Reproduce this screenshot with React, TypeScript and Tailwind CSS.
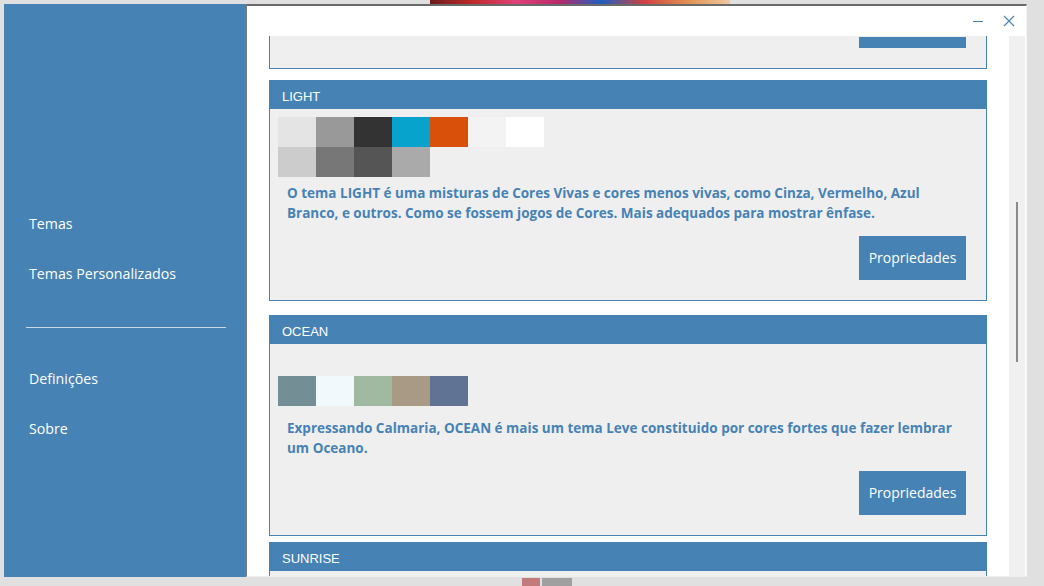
import React from "react";

type Theme = {
  name: string;
  rows: string[][];
  swatchTop: string;
  lines: string[];
};

const themes: Theme[] = [
  {
    name: "LIGHT",
    rows: [
      ["#e4e4e4", "#999999", "#333333", "#07a3cc", "#d9500b", "#f3f3f3", "#ffffff"],
      ["#cccccc", "#777777", "#555555", "#aaaaaa"],
    ],
    swatchTop: "pt-[8px]",
    lines: [
      "O tema LIGHT é uma misturas de Cores Vivas e cores menos vivas, como Cinza, Vermelho, Azul",
      "Branco, e outros. Como se fossem jogos de Cores. Mais adequados para mostrar ênfase.",
    ],
  },
  {
    name: "OCEAN",
    rows: [["#748e96", "#f1f9fc", "#9fbaa0", "#a89a84", "#617394"]],
    swatchTop: "pt-[32px]",
    lines: [
      "Expressando Calmaria, OCEAN é mais um tema Leve constituido por cores fortes que fazer lembrar",
      "um Oceano.",
    ],
  },
];

const PropButton = () => (
  <button className="flex h-[44px] w-[107px] items-center justify-center bg-[#4682b4] pb-[2px] font-['Open_Sans',sans-serif] text-[14px] text-white">
    Propriedades
  </button>
);

const ThemeCard = ({ theme, gap }: { theme: Theme; gap: string }) => (
  <div className={`${gap} border border-[#4682b4] bg-[#efefef]`}>
    <div className="flex h-[28px] items-center bg-[#4682b4] pl-[12px] pt-[3px] font-['Liberation_Sans',sans-serif] text-[13px] text-white">
      {theme.name}
    </div>
    <div className="flex flex-col">
      <div className={`h-[68px] pl-[8px] ${theme.swatchTop}`}>
        {theme.rows.map((row, i) => (
          <div key={i} className="flex">
            {row.map((c, j) => (
              <div key={j} className="h-[30px] w-[38px]" style={{ backgroundColor: c }} />
            ))}
          </div>
        ))}
      </div>
      <p className="mt-[6px] pl-[17px] font-['Open_Sans',sans-serif] text-[13.5px] font-bold leading-[20px] text-[#4682b4]">
        {theme.lines[0]}
        <br />
        {theme.lines[1]}
      </p>
      <div className="mt-[13px] flex justify-end pb-[20px] pr-[20px]">
        <PropButton />
      </div>
    </div>
  </div>
);

const MenuItem = ({ label }: { label: string }) => (
  <div className="flex h-[50px] items-center pl-[25px] font-['Open_Sans',sans-serif] text-[14.2px] text-white">
    {label}
  </div>
);

export default function App() {
  return (
    <div className="flex h-[586px] w-[1044px] flex-col overflow-hidden bg-[#e0e0e0]">
      {/* bits of wallpaper peeking out */}
      <div className="flex h-[4px]">
        <div className="ml-[430px] h-full w-[300px] bg-[linear-gradient(90deg,#6b1a1a,#c02a2a,#e0407a,#b82a6a,#1e5fc0,#d04040,#e09050,#f0c8a0)]" />
      </div>

      <div className="ml-[4px] flex h-[573px]">
        {/* sidebar */}
        <div className="flex w-[242px] flex-col bg-[#4682b4] pt-[195px]">
          <MenuItem label="Temas" />
          <MenuItem label="Temas Personalizados" />
          <div className="ml-[22px] mt-[28px] h-px w-[200px] bg-[#cbd8e5]" />
          <div className="mt-[26px]">
            <MenuItem label="Definições" />
            <MenuItem label="Sobre" />
          </div>
        </div>

        {/* main window */}
        <div className="flex w-[781px] flex-col border-l border-t-2 border-b border-r border-l-[#7a7a7a] border-t-[#6b6b6b] border-b-[#eeeeee] border-r-[#f4f4f4] bg-white">
          <div className="flex h-[30px] items-center justify-end gap-[20px] pr-[10px] text-[#4682b4]">
            <div className="h-px w-[10px] bg-[#4682b4]" />
            <svg width="12" height="12" viewBox="0 0 12 12" className="mr-[1px]">
              <path d="M1 1 L11 11 M11 1 L1 11" stroke="#4682b4" strokeWidth="1.1" fill="none" />
            </svg>
          </div>

          <div className="flex h-[540px]">
            <div className="w-[762px] overflow-hidden px-[22px]">
              {/* tail of the card scrolled above */}
              <div className="flex h-[33px] items-end justify-end border-x border-b border-[#4682b4] bg-[#efefef] pb-[20px] pr-[20px]">
                <div className="h-[11px] w-[107px] bg-[#4682b4]" />
              </div>
              <ThemeCard theme={themes[0]} gap="mt-[11px]" />
              <ThemeCard theme={themes[1]} gap="mt-[14px]" />
              <div className="mt-[6px] border border-[#4682b4] bg-[#efefef]">
                <div className="flex h-[28px] items-center bg-[#4682b4] pl-[12px] pt-[3px] font-['Liberation_Sans',sans-serif] text-[13px] text-white">
                  SUNRISE
                </div>
                <div className="h-[60px]" />
              </div>
            </div>

            {/* scrollbar */}
            <div className="w-[16px] bg-[#f0f0f0] pl-[7px] pt-[166px]">
              <div className="h-[160px] w-[2px] bg-[#8a8a8a]" />
            </div>
          </div>
        </div>
      </div>

      <div className="flex h-[9px]">
        <div className="ml-[522px] mt-[1px] h-[8px] w-[18px] bg-[#c27a7a]" />
        <div className="ml-[2px] mt-[1px] h-[8px] w-[30px] bg-[#a0a0a0]" />
      </div>
    </div>
  );
}
